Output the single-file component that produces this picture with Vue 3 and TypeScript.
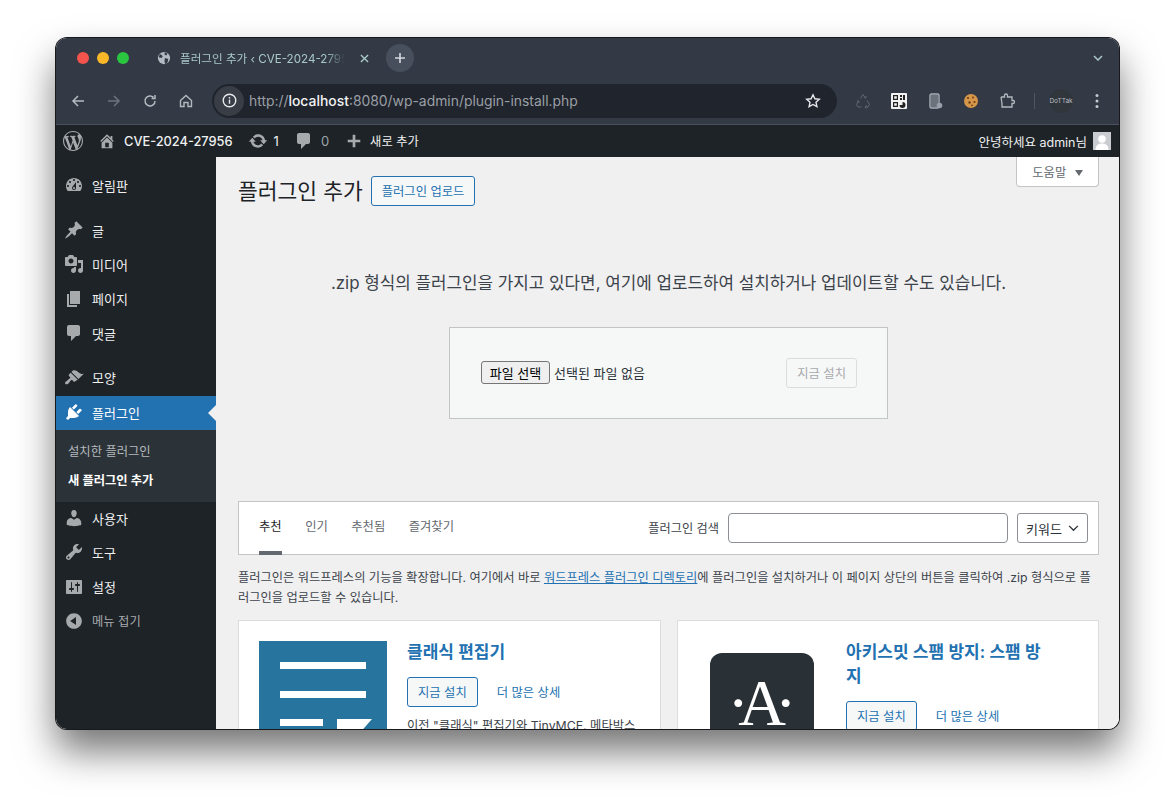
<script setup lang="ts">
interface MenuItem {
  label: string
  icon: string
  gap?: boolean
  active?: boolean
  dim?: boolean
}

const icons: Record<string, string> = {
  wp: 'M20 10c0-5.51-4.49-10-10-10C4.48 0 0 4.49 0 10c0 5.52 4.48 10 10 10 5.51 0 10-4.48 10-10zM7.78 15.37L4.37 6.22c.55-.02 1.17-.08 1.17-.08.5-.06.44-1.13-.06-1.11 0 0-1.45.11-2.37.11-.18 0-.37 0-.58-.01C4.12 2.69 6.87 1.11 10 1.11c2.33 0 4.45.87 6.05 2.34-.68-.11-1.65.39-1.65 1.58 0 .74.45 1.36.9 2.1.35.61.55 1.36.55 2.46 0 1.49-1.4 5-1.4 5l-3.03-8.37c.54-.02.82-.17.82-.17.5-.05.44-1.25-.06-1.22 0 0-1.44.12-2.38.12-.87 0-2.33-.12-2.33-.12-.5-.03-.56 1.2-.06 1.22l.92.08 1.26 3.41zM17.41 10c.24-.64.74-1.87.43-4.25.7 1.29 1.05 2.71 1.05 4.25 0 3.29-1.73 6.24-4.4 7.78.97-2.59 1.94-5.2 2.92-7.78zM6.1 18.09C3.12 16.65 1.11 13.53 1.11 10c0-1.3.23-2.48.72-3.59C3.25 10.3 4.67 14.2 6.1 18.09zm4.03-6.63l2.58 6.98c-.86.29-1.76.45-2.71.45-.79 0-1.57-.11-2.29-.33.81-2.38 1.62-4.74 2.42-7.1z',
  home: 'M16 8.5l1.53 1.53-1.06 1.06L10 4.62l-6.47 6.47-1.06-1.06L10 2.5l4 4v-2h2v4zm-6-2.46l6 5.99V18H4v-5.97zM12 17v-5H8v5h4z',
  update: 'M10.2 3.28c3.53 0 6.43 2.61 6.92 6h2.08l-3.5 4-3.5-4h2.32c-.45-1.97-2.21-3.45-4.32-3.45-1.45 0-2.73.71-3.54 1.78L4.95 5.66C6.23 4.2 8.11 3.28 10.2 3.28zm-.4 13.44c-3.52 0-6.43-2.61-6.92-6H.8l3.5-4c1.17 1.33 2.33 2.67 3.5 4H5.48c.45 1.97 2.21 3.45 4.32 3.45 1.45 0 2.73-.71 3.54-1.78l1.71 1.95c-1.28 1.46-3.15 2.38-5.25 2.38z',
  comment: 'M5 2h9c1.1 0 2 .9 2 2v7c0 1.1-.9 2-2 2h-2l-5 5v-5H5c-1.1 0-2-.9-2-2V4c0-1.1.9-2 2-2z',
  plus: 'M8.5 3h3v5.5H17v3h-5.5V17h-3v-5.5H3v-3h5.5z',
  dashboard: 'M3.76 16h12.48c1.1-1.37 1.76-3.11 1.76-5 0-4.42-3.58-8-8-8s-8 3.58-8 8c0 1.89.66 3.63 1.76 5zM10 4c.55 0 1 .45 1 1s-.45 1-1 1-1-.45-1-1 .45-1 1-1zM6 6c.55 0 1 .45 1 1s-.45 1-1 1-1-.45-1-1 .45-1 1-1zm8 0c.55 0 1 .45 1 1s-.45 1-1 1-1-.45-1-1 .45-1 1-1zm-5.37 5.55L12 7v6c0 1.1-.9 2-2 2s-2-.9-2-2c0-.57.24-1.08.63-1.45zM4 10c.55 0 1 .45 1 1s-.45 1-1 1-1-.45-1-1 .45-1 1-1zm12 0c.55 0 1 .45 1 1s-.45 1-1 1-1-.45-1-1 .45-1 1-1zm-5 3c0-.55-.45-1-1-1s-1 .45-1 1 .45 1 1 1 1-.45 1-1z',
  post: 'M10.44 3.02l1.82-1.82 6.36 6.35-1.83 1.82c-1.05-.68-2.48-.57-3.41.36l-.75.75c-.92.93-1.04 2.35-.35 3.41l-1.83 1.82-2.41-2.41-2.8 2.79c-.42.42-3.38 2.71-3.8 2.29s1.86-3.39 2.28-3.81l2.79-2.79L4.1 9.36l1.83-1.82c1.05.69 2.48.57 3.4-.36l.75-.75c.93-.92 1.05-2.35.36-3.41z',
  media: 'M13 11V4c0-.55-.45-1-1-1h-1.67L9 1H5L3.67 3H2c-.55 0-1 .45-1 1v7c0 .55.45 1 1 1h10c.55 0 1-.45 1-1zM7 4.5c1.38 0 2.5 1.12 2.5 2.5S8.38 9.5 7 9.5 4.5 8.38 4.5 7 5.62 4.5 7 4.5zM14 6h5v10.5c0 1.38-1.12 2.5-2.5 2.5S14 17.88 14 16.5s1.12-2.5 2.5-2.5c.17 0 .34.02.5.05V9h-3V6zm-4 8.05V13h2v3.5c0 1.38-1.12 2.5-2.5 2.5S7 17.88 7 16.5 8.12 14 9.5 14c.17 0 .34.02.5.05z',
  page: 'M6 15V2h10v13H6zm-1 1h8v2H3V5h2v11z',
  appearance: 'M14.48 11.06L7.41 3.99l1.5-1.5c.5-.56 2.3-.47 3.51.32 1.21.8 1.43 1.28 2.91 2.1 1.18.64 2.45 1.26 4.45.85zm-.71.71L6.7 4.7 4.93 6.47c-.39.39-.39 1.02 0 1.41l1.06 1.06c.39.39.39 1.03 0 1.42-.6.6-1.43 1.11-2.21 1.69-.35.26-.7.53-1.01.84C1.43 13.23.4 14.85 1.45 15.9c1.05 1.05 2.68.02 3.03-.34.31-.31.58-.66.84-1.01.58-.78 1.09-1.61 1.69-2.21.39-.39 1.03-.39 1.42 0l1.06 1.06c.39.39 1.02.39 1.41 0z',
  plugin: 'M13.11 4.36L9.87 7.6 8 5.73l3.24-3.24c.35-.34 1.05-.2 1.56.32.52.51.66 1.21.31 1.55zm-8 1.77l.91-1.12 9.01 9.01-1.19.84c-.71.71-2.63 1.16-3.82 1.16H6.14L4.9 17.26c-.59.59-1.54.59-2.12 0-.59-.58-.59-1.53 0-2.12l1.24-1.24v-3.88c0-1.13.4-3.19 1.09-3.89zm7.26 3.97l3.24-3.24c.34-.35 1.04-.21 1.55.31.52.51.66 1.21.31 1.55l-3.24 3.25z',
  users: 'M10 9.25c-2.27 0-2.73-3.44-2.73-3.44C7 4.02 7.82 2 9.97 2c2.16 0 2.98 2.02 2.71 3.81 0 0-.41 3.44-2.68 3.44zm0 2.57L12.72 10c2.39 0 4.52 2.33 4.52 4.53v2.49s-3.65 1.13-7.24 1.13c-3.65 0-7.24-1.13-7.24-1.13v-2.49c0-2.25 1.94-4.48 4.47-4.48z',
  tools: 'M16.68 9.77c-1.34 1.34-3.3 1.67-4.95.99l-5.41 6.52c-.99.99-2.59.99-3.58 0s-.99-2.59 0-3.57l6.52-5.42c-.68-1.65-.35-3.61.99-4.95 1.28-1.28 3.12-1.62 4.72-1.06l-2.89 2.89 2.82 2.82 2.86-2.87c.53 1.58.18 3.39-1.08 4.65zM3.81 16.21c.4.39 1.04.39 1.43 0 .4-.4.4-1.04 0-1.43-.39-.4-1.03-.4-1.43 0-.39.39-.39 1.03 0 1.43z',
  settings: 'M18 16V4c0-.55-.45-1-1-1H3c-.55 0-1 .45-1 1v12c0 .55.45 1 1 1h14c.55 0 1-.45 1-1zM8 11h1c.55 0 1 .45 1 1s-.45 1-1 1H8v1.5c0 .28-.22.5-.5.5s-.5-.22-.5-.5V13H6c-.55 0-1-.45-1-1s.45-1 1-1h1V5.5c0-.28.22-.5.5-.5s.5.22.5.5V11zm5-2h-1c-.55 0-1-.45-1-1s.45-1 1-1h1V5.5c0-.28.22-.5.5-.5s.5.22.5.5V7h1c.55 0 1 .45 1 1s-.45 1-1 1h-1v5.5c0 .28-.22.5-.5.5s-.5-.22-.5-.5V9z',
  collapse: 'M10 2.16c4.33 0 7.84 3.51 7.84 7.84s-3.51 7.84-7.84 7.84S2.16 14.33 2.16 10 5.71 2.16 10 2.16zm2 11.72V6.12L6.18 9.97z'
}

const topMenu: MenuItem[] = [
  { label: '알림판', icon: 'dashboard' },
  { label: '글', icon: 'post', gap: true },
  { label: '미디어', icon: 'media' },
  { label: '페이지', icon: 'page' },
  { label: '댓글', icon: 'comment' },
  { label: '모양', icon: 'appearance', gap: true },
  { label: '플러그인', icon: 'plugin', active: true }
]

const bottomMenu: MenuItem[] = [
  { label: '사용자', icon: 'users' },
  { label: '도구', icon: 'tools' },
  { label: '설정', icon: 'settings' },
  { label: '메뉴 접기', icon: 'collapse', dim: true }
]

const tabs = ['추천', '인기', '추천됨', '즐겨찾기']
</script>

<template>
  <div class="stage">
    <div class="window">
      <div class="tabstrip">
        <div class="lights">
          <span class="light red"></span>
          <span class="light yellow"></span>
          <span class="light green"></span>
        </div>
        <div class="tab">
          <svg class="globe" viewBox="0 0 16 16" width="14" height="14">
            <circle cx="8" cy="8" r="7" fill="#b4bac2" />
            <path d="M3 3.5l2.5 1 1 2-1.5 1.5-3-1zM9 1.5l3 1.5-1.5 2-2-1zM9 8l4 1-1 4-2.5 2-1-3z" fill="#333a45" />
          </svg>
          <span class="tab-title">플러그인 추가 ‹ CVE-2024-27956 — WordPress</span>
          <svg class="tab-close" viewBox="0 0 10 10" width="9" height="9">
            <path d="M1 1l8 8M9 1l-8 8" stroke="#a9c8c8" stroke-width="1.5" />
          </svg>
        </div>
        <div class="new-tab">
          <svg viewBox="0 0 12 12" width="12" height="12">
            <path d="M6 1v10M1 6h10" stroke="#d5d9de" stroke-width="1.6" />
          </svg>
        </div>
        <svg class="tab-menu" viewBox="0 0 10 6" width="10" height="6">
          <path d="M1 1l4 4 4-4" fill="none" stroke="#a9c8c8" stroke-width="1.5" />
        </svg>
      </div>

      <div class="toolbar">
        <div class="nav">
          <svg viewBox="0 0 14 14" width="14" height="14">
            <path d="M13 7H2M7 2L2 7l5 5" fill="none" stroke="#b5b9bf" stroke-width="1.5" />
          </svg>
          <svg viewBox="0 0 14 14" width="14" height="14">
            <path d="M1 7h11M7 2l5 5-5 5" fill="none" stroke="#6d737c" stroke-width="1.5" />
          </svg>
          <svg viewBox="0 0 14 14" width="14" height="14">
            <path d="M12 7a5 5 0 1 1-1.5-3.6M12 1v3.4H8.6" fill="none" stroke="#b5b9bf" stroke-width="1.5" />
          </svg>
          <svg viewBox="0 0 14 14" width="14" height="14">
            <path d="M1.5 6.5L7 1.5l5.500 5v6h-3.500V8.500h-4v4H1.500z" fill="none" stroke="#b5b9bf" stroke-width="1.400" />
          </svg>
        </div>
        <div class="address">
          <span class="info">
            <svg viewBox="0 0 16 16" width="15" height="15">
              <circle cx="8" cy="8" r="6.700" fill="none" stroke="#e6e8ea" stroke-width="1.500" />
              <path d="M8 7v4.500M8 4.300v1.500" stroke="#e6e8ea" stroke-width="1.500" />
            </svg>
          </span>
          <span class="url">http://<b>localhost</b>:8080/wp-admin/plugin-install.php</span>
          <svg class="star" viewBox="0 0 16 16" width="16" height="16">
            <path d="M8 1.800l1.900 4 4.400.500-3.300 3 .900 4.400L8 11.500l-3.900 2.200.900-4.400-3.300-3 4.400-.500z" fill="none" stroke="#e6e8ea" stroke-width="1.400" />
          </svg>
        </div>
        <div class="extensions">
          <svg viewBox="0 0 16 16" width="16" height="16">
            <path d="M5.500 5.500L8 1.500l2 3M9 4.500l1.800.6.400-1.900M12 7.500l2.500 4-1.500 2.500H10M11.500 12.300L10 14l1.500 1.600M6.500 14H3l-1.500-2.500L3.500 8M2 8.500l1.500-.7.800 1.800" fill="none" stroke="#626974" stroke-width="1" />
          </svg>
          <svg viewBox="0 0 16 16" width="16" height="16">
            <rect width="16" height="16" rx="1" fill="#f2f2f2" />
            <path d="M2 2h5v5H2zM3.200 3.200v2.600h2.600V3.200zM9 2h2v2H9zM12 2h2v5h-2zM9 5h2v2H9zM2 9h5v5H2zM3.200 10.200v2.600h2.600v-2.600z" fill="#222" fill-rule="evenodd" />
            <path d="M11.500 9a3 3 0 1 1-3 3h3z" fill="#222" />
          </svg>
          <svg viewBox="0 0 16 16" width="16" height="16">
            <rect x="3" y="1" width="9" height="14" rx="1.500" fill="none" stroke="#aab0b8" stroke-width="1.400" />
            <rect x="4" y="2" width="7" height="12" fill="#6c727b" />
            <circle cx="12.500" cy="12.500" r="2.800" fill="#9aa1aa" />
          </svg>
          <svg viewBox="0 0 16 16" width="16" height="16">
            <circle cx="8" cy="8" r="7" fill="#d6964a" />
            <circle cx="5" cy="5" r="1.100" fill="#6e3d17" />
            <circle cx="10" cy="4.500" r="1" fill="#6e3d17" />
            <circle cx="11.500" cy="9" r="1.100" fill="#6e3d17" />
            <circle cx="6.500" cy="9.500" r="1.200" fill="#6e3d17" />
            <circle cx="9" cy="12.300" r=".9" fill="#6e3d17" />
          </svg>
          <svg viewBox="0 0 16 16" width="16" height="16">
            <path d="M2 4h3.500V2.500a1.500 1.500 0 0 1 3 0V4H13v3.500h1a1.500 1.500 0 0 1 0 3h-1V14H3v-3.500M2 4l1 6.500" fill="none" stroke="#b5b9bf" stroke-width="1.300" />
          </svg>
          <span class="divider"></span>
          <span class="dottak">DoTTak</span>
          <svg class="kebab" viewBox="0 0 4 16" width="4" height="16">
            <circle cx="2" cy="2.500" r="1.500" fill="#c5c9ce" />
            <circle cx="2" cy="8" r="1.500" fill="#c5c9ce" />
            <circle cx="2" cy="13.500" r="1.500" fill="#c5c9ce" />
          </svg>
        </div>
      </div>

      <div class="adminbar">
        <svg class="dash wp" viewBox="0 0 20 20"><path :d="icons.wp" /></svg>
        <svg class="dash home" viewBox="0 0 20 20"><path :d="icons.home" /></svg>
        <span class="site">CVE-2024-27956</span>
        <svg class="dash update" viewBox="0 0 20 20"><path :d="icons.update" /></svg>
        <span class="count">1</span>
        <svg class="dash bubble" viewBox="0 0 20 20"><path :d="icons.comment" /></svg>
        <span class="count zero">0</span>
        <svg class="dash add" viewBox="0 0 20 20"><path :d="icons.plus" /></svg>
        <span class="new">새로 추가</span>
        <span class="howdy">안녕하세요 admin님</span>
        <span class="avatar">
          <svg viewBox="0 0 18 18" width="18" height="18">
            <rect width="18" height="18" fill="#c9ccd0" />
            <circle cx="9" cy="7" r="3.800" fill="#fff" />
            <path d="M2.500 18c0-5 3-6.500 6.500-6.500s6.500 1.500 6.500 6.500z" fill="#fff" />
          </svg>
        </span>
      </div>

      <div class="admin">
        <nav class="sidebar">
          <a
            v-for="item in topMenu"
            :key="item.label"
            class="menu-item"
            :class="{ gap: item.gap, active: item.active }"
          >
            <svg class="dash" viewBox="0 0 20 20"><path :d="icons[item.icon]" /></svg>
            <span>{{ item.label }}</span>
          </a>
          <div class="submenu">
            <a>설치한 플러그인</a>
            <a class="current">새 플러그인 추가</a>
          </div>
          <a
            v-for="item in bottomMenu"
            :key="item.label"
            class="menu-item"
            :class="{ dim: item.dim }"
          >
            <svg class="dash" viewBox="0 0 20 20"><path :d="icons[item.icon]" /></svg>
            <span>{{ item.label }}</span>
          </a>
        </nav>

        <main class="content">
          <div class="head">
            <div class="title-row">
              <h1>플러그인 추가</h1>
              <button class="btn">플러그인 업로드</button>
            </div>
            <button class="help">도움말 <i class="caret"></i></button>
          </div>

          <p class="upload-help">.zip 형식의 플러그인을 가지고 있다면, 여기에 업로드하여 설치하거나 업데이트할 수도 있습니다.</p>

          <div class="upload-box">
            <div class="file">
              <button class="file-btn">파일 선택</button>
              <span>선택된 파일 없음</span>
            </div>
            <button class="btn disabled">지금 설치</button>
          </div>

          <div class="filter">
            <ul class="filter-tabs">
              <li v-for="(tab, i) in tabs" :key="tab" :class="{ current: i === 0 }">{{ tab }}</li>
            </ul>
            <div class="search">
              <label>플러그인 검색</label>
              <span class="input"></span>
              <span class="select">키워드
                <svg viewBox="0 0 12 8" width="11" height="7">
                  <path d="M1 1l5 5 5-5" fill="none" stroke="#2c3338" stroke-width="1.500" />
                </svg>
              </span>
            </div>
          </div>

          <p class="intro">플러그인은 워드프레스의 기능을 확장합니다. 여기에서 바로 <a>워드프레스 플러그인 디렉토리</a>에 플러그인을 설치하거나 이 페이지 상단의 버튼을 클릭하여 .zip 형식으로 플러그인을 업로드할 수 있습니다.</p>

          <div class="cards">
            <article class="card">
              <div class="plugin-icon classic">
                <span class="line"></span>
                <span class="line"></span>
                <span class="line-row">
                  <span class="short"></span>
                  <span class="flag"></span>
                </span>
              </div>
              <div class="card-body">
                <h3>클래식 편집기</h3>
                <div class="actions">
                  <button class="btn">지금 설치</button>
                  <a>더 많은 상세</a>
                </div>
                <p>이전 "클래식" 편집기와 TinyMCE, 메타박스 등을 활성화합니다.</p>
              </div>
            </article>
            <article class="card">
              <div class="plugin-icon akismet">
                <span class="akismet-mark">·A·</span>
              </div>
              <div class="card-body">
                <h3>아키스밋 스팸 방지: 스팸 방지</h3>
                <div class="actions">
                  <button class="btn">지금 설치</button>
                  <a>더 많은 상세</a>
                </div>
              </div>
            </article>
          </div>
        </main>
      </div>
    </div>
  </div>
</template>

<style>
html, body {
  background: #fff;
  overflow: hidden;
}
</style>

<style scoped>
.stage {
  padding: 38px 56px 74px;
  height: 803px;
  box-sizing: border-box;
  font-family: Inter, "Noto Sans CJK KR", sans-serif;
}

.window {
  height: 691px;
  border-radius: 11px;
  overflow: hidden;
  display: flex;
  flex-direction: column;
  box-shadow: 0 0 0 1px #17191d, 0 22px 38px rgba(0, 0, 0, 0.55);
}

.tabstrip {
  height: 40px;
  flex: none;
  background: #333a45;
  display: flex;
  align-items: center;
  padding: 0 16px 0 21px;
  box-sizing: border-box;
}

.lights {
  display: flex;
  gap: 8px;
}

.light {
  width: 12px;
  height: 12px;
  border-radius: 50%;
}

.red { background: #f5544d; }
.yellow { background: #fab728; }
.green { background: #2ac640; }

.tab {
  display: flex;
  align-items: center;
  margin-left: 28px;
  width: 219px;
}

.globe { flex: none; }

.tab-title {
  width: 165px;
  margin-left: 9px;
  white-space: nowrap;
  overflow: hidden;
  font-size: 11.6px;
  color: #a9c8c8;
  -webkit-mask-image: linear-gradient(90deg, #000 88%, transparent);
  mask-image: linear-gradient(90deg, #000 88%, transparent);
}

.tab-close { margin-left: 15px; flex: none; }

.new-tab {
  width: 28px;
  height: 28px;
  border-radius: 50%;
  background: #474f5c;
  display: flex;
  align-items: center;
  justify-content: center;
  margin-left: 10px;
}

.tab-menu { margin-left: auto; }

.toolbar {
  height: 47px;
  flex: none;
  background: #333a45;
  border-bottom: 1px solid #4a515c;
  padding-bottom: 1px;
  box-sizing: border-box;
  display: flex;
  align-items: center;
}

.nav {
  display: flex;
  gap: 22px;
  padding-left: 15px;
  width: 156px;
  box-sizing: border-box;
}

.address {
  width: 625px;
  height: 34px;
  background: #20242c;
  border-radius: 17px;
  display: flex;
  align-items: center;
  padding: 2px 16px 2px 2px;
  box-sizing: border-box;
}

.info {
  width: 30px;
  height: 30px;
  border-radius: 50%;
  background: #383d46;
  display: flex;
  align-items: center;
  justify-content: center;
}

.url {
  margin-left: 5px;
  font-size: 13.9px;
  color: #9a9fa6;
  flex: 1;
}

.url b {
  color: #f2f3f4;
  font-weight: 500;
}

.extensions {
  display: flex;
  align-items: center;
  margin-left: 18px;
  gap: 20px;
}

.divider {
  width: 1px;
  height: 16px;
  background: #4f5661;
  margin-left: -1px;
}

.dottak {
  width: 24px;
  margin: 0 0 0 -6px;
  height: 24px;
  line-height: 24px;
  border-radius: 50%;
  background: #31353c;
  font-size: 6.5px;
  text-align: center;
  color: #b8bcc2;
  white-space: nowrap;
}

.kebab { margin-left: 2px; }

.adminbar {
  height: 32px;
  flex: none;
  background: #1d2327;
  display: flex;
  align-items: center;
  padding: 0 8px 0 7px;
  color: #f0f0f1;
  font-size: 13px;
}

.dash {
  width: 20px;
  height: 20px;
  fill: #a7aaad;
  flex: none;
}

.adminbar .home { margin-left: 15px; width: 18px; height: 18px; }
.adminbar .site { margin-left: 8px; font-size: 12.8px; font-weight: 500; }
.adminbar .update { margin-left: 15px; }
.adminbar .count { margin-left: 6px; }
.adminbar .bubble { margin-left: 15px; }
.adminbar .zero { color: #9ea3a8; margin-left: 7px; }
.adminbar .add { margin-left: 16px; width: 18px; height: 18px; }
.adminbar .new { margin-left: 7px; font-size: 12.3px; }
.adminbar .howdy { margin-left: auto; font-size: 12.5px; }
.adminbar .avatar { margin-left: 6px; height: 18px; }

.admin {
  flex: 1;
  min-height: 0;
  display: flex;
  background: #f0f0f1;
}

.sidebar {
  width: 160px;
  flex: none;
  background: #1d2327;
  padding-top: 12px;
  box-sizing: border-box;
}

.menu-item {
  height: 34.3px;
  box-sizing: border-box;
  padding: 0 0 1.5px 8px;
  display: flex;
  align-items: center;
  gap: 8px;
  font-size: 13px;
  color: #f0f0f1;
  position: relative;
}

.menu-item.gap { margin-top: 10.5px; }

.menu-item.active {
  background: #2271b1;
  color: #fff;
}

.menu-item.active .dash { fill: #fff; }

.menu-item.active::after {
  content: "";
  position: absolute;
  right: 0;
  top: 9px;
  border: 8px solid transparent;
  border-right-color: #f0f0f1;
  border-left-width: 0;
}

.menu-item.dim { color: #a7aaad; font-size: 12.3px; }

.submenu {
  background: #2c3338;
  padding: 7px 0 6.7px;
  display: flex;
  flex-direction: column;
}

.submenu a {
  height: 29px;
  line-height: 29px;
  padding-left: 12px;
  font-size: 12.3px;
  color: #b4b9be;
}

.submenu a.current {
  color: #fff;
  font-weight: 600;
}

.content {
  flex: 1;
  min-width: 0;
  padding: 0 20px 0 22px;
  color: #3c434a;
  overflow: hidden;
}

.head {
  display: flex;
  justify-content: space-between;
  align-items: flex-start;
}

.title-row {
  display: flex;
  align-items: center;
  margin-top: 19px;
}

h1 {
  margin: 0;
  font-size: 21.5px;
  font-weight: 400;
  line-height: 30px;
  color: #1d2327;
}

.btn {
  font: inherit;
  font-size: 12.3px;
  height: 30px;
  padding: 0 10px;
  border: 1px solid #2271b1;
  border-radius: 3px;
  background: #f6f7f7;
  color: #2271b1;
  box-sizing: border-box;
}

.title-row .btn {
  margin-left: 8px;
}

.btn.disabled {
  border-color: #dcdcde;
  color: #a7aaad;
}

.help {
  font: inherit;
  font-size: 12.3px;
  width: 83px;
  height: 30px;
  background: #fff;
  border: 1px solid #c3c4c7;
  border-top: none;
  border-radius: 0 0 4px 4px;
  color: #646970;
}

.caret {
  display: inline-block;
  margin-left: 5px;
  border: 4px solid transparent;
  border-top: 6px solid #646970;
  border-bottom: 0;
  vertical-align: 1px;
}

.upload-help {
  margin: 65px 0 32px;
  text-align: center;
  font-size: 16.88px;
  line-height: 24px;
  color: #3c434a;
}

.upload-box {
  height: 92px;
  width: 439px;
  margin: 0 auto 82px;
  padding: 0 30px 0 31px;
  box-sizing: border-box;
  background: #f6f7f7;
  border: 1px solid #c3c4c7;
  display: flex;
  align-items: center;
  justify-content: space-between;
}

.file {
  display: flex;
  align-items: center;
  gap: 4px;
  margin-bottom: 2px;
  font-size: 13px;
  color: #2c3338;
}

.file-btn {
  font: inherit;
  height: 23px;
  width: 69px;
  padding: 0;
  color: #000;
  background: #efefef;
  border: 1px solid #767676;
  border-radius: 3px;
}

.filter {
  height: 54px;
  box-sizing: border-box;
  background: #fff;
  border: 1px solid #c3c4c7;
  display: flex;
  justify-content: space-between;
  padding: 0 10px 0 20px;
}

.filter-tabs {
  display: flex;
  gap: 23.5px;
  list-style: none;
  margin: 0;
  padding: 0;
  font-size: 12.3px;
  color: #646970;
}

.filter-tabs li {
  line-height: 50px;
  height: 53px;
  box-sizing: border-box;
}

.filter-tabs li.current {
  color: #1d2327;
  border-bottom: 4px solid #646970;
}

.search {
  display: flex;
  align-items: center;
  font-size: 12.2px;
}

.input {
  width: 280px;
  height: 30px;
  box-sizing: border-box;
  margin-left: 9px;
  background: #fff;
  border: 1px solid #8c8f94;
  border-radius: 4px;
}

.select {
  width: 71px;
  height: 30px;
  box-sizing: border-box;
  margin-left: 9px;
  border: 1px solid #8c8f94;
  border-radius: 3px;
  display: flex;
  align-items: center;
  justify-content: space-between;
  padding: 0 8px;
  font-size: 13px;
  color: #2c3338;
}

.intro {
  margin: 13px 0 12px;
  font-size: 12.25px;
  line-height: 20px;
}

.intro a {
  color: #2271b1;
  text-decoration: underline;
}

.cards {
  display: grid;
  grid-template-columns: 423px 422px;
  gap: 16px;
  align-items: start;
}

.card {
  height: 200px;
  box-sizing: border-box;
  background: #fff;
  border: 1px solid #dcdcde;
  padding: 20px 20px 0;
  display: flex;
  gap: 20px;
}

.plugin-icon {
  width: 128px;
  height: 128px;
  flex: none;
  box-sizing: border-box;
}

.classic {
  background: #27749e;
  padding: 21px 21px 0;
  display: flex;
  flex-direction: column;
  gap: 21.5px;
}

.classic .line {
  height: 7px;
  flex: none;
  background: #fff;
}

.line-row {
  display: flex;
  gap: 14px;
}

.short {
  width: 43px;
  height: 7px;
  flex: none;
  background: #fff;
}

.flag {
  width: 35px;
  height: 30px;
  flex: none;
  background: #fff;
  clip-path: polygon(0 0, 100% 0, 25% 100%, 0 100%);
}

.akismet {
  width: 104px;
  height: 104px;
  margin: 12px;
  background: #2a3136;
  border-radius: 12px;
  display: flex;
  justify-content: center;
  padding-top: 14px;
}

.akismet-mark {
  font-family: "Liberation Serif", serif;
  font-size: 66px;
  line-height: 72px;
  letter-spacing: -11px;
  margin-left: -11px;
  color: #fff;
}

.card-body {
  flex: 1;
  min-width: 0;
  margin-top: -1px;
}

.card:nth-child(2) .plugin-icon { margin-right: 32px; }
.card:nth-child(2) { gap: 0; }
.card:nth-child(2) .card-body { padding-right: 34px; }

h3 {
  margin: 0;
  font-size: 17px;
  font-weight: 600;
  line-height: 24px;
  color: #2271b1;
}

.actions {
  margin-top: 13px;
  display: flex;
  align-items: center;
  gap: 19px;
  font-size: 12.3px;
  color: #2271b1;
}

.card-body p {
  margin: 9px 0 0;
  font-size: 12.3px;
  line-height: 20px;
}
</style>
